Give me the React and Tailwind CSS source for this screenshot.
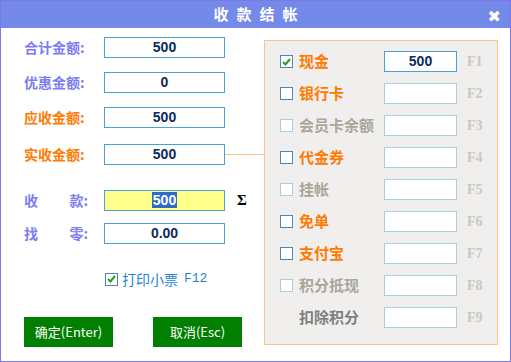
import { useState } from "react";

const cjk = "font-['SimSun','Noto_Sans_CJK_SC',sans-serif]";

const payRows = [
  { label: "现金", key: "F1", checked: true, value: "500", tone: "orange", active: true },
  { label: "银行卡", key: "F2", tone: "orange" },
  { label: "会员卡余额", key: "F3", tone: "gray" },
  { label: "代金券", key: "F4", tone: "orange" },
  { label: "挂帐", key: "F5", tone: "gray" },
  { label: "免单", key: "F6", tone: "orange" },
  { label: "支付宝", key: "F7", tone: "orange" },
  { label: "积分抵现", key: "F8", tone: "gray" },
  { label: "扣除积分", key: "F9", tone: "dark", noBox: true },
];

function Check({ checked, disabled }) {
  return (
    <div
      className={`w-[13px] h-[13px] shrink-0 border bg-white flex items-center justify-center ${
        disabled ? "border-[#a9cde3]" : "border-[#4f86b5]"
      }`}
    >
      {checked && (
        <svg width="9" height="8" viewBox="0 0 9 8">
          <path d="M1 4 L3.5 6.5 L8 1" stroke="#2f9a1e" strokeWidth="2" fill="none" />
        </svg>
      )}
    </div>
  );
}

function Field({ label, value, tone = "blue", mt, yellow, selected, spread, line }) {
  return (
    <div className={`flex items-center ${mt}`}>
      <div
        className={`w-[80px] shrink-0 flex text-[14px] font-bold ${cjk} ${
          tone === "orange" ? "text-[#ff7a00]" : "text-[#7b7ef0]"
        } ${spread ? "justify-between pr-[16px]" : ""}`}
      >
        {spread ? (
          <>
            <span>{label[0]}</span>
            <span>{label[1]}:</span>
          </>
        ) : (
          <span>{label}:</span>
        )}
      </div>
      <div
        className={`w-[121px] h-[21px] shrink-0 border border-[#4a9fd4] flex items-center justify-center text-[14px] font-bold text-[#0b2a5c] font-['Liberation_Sans',sans-serif] ${
          yellow ? "bg-[#ffff8c]" : "bg-white"
        }`}
      >
        {selected ? <span className="bg-[#3169c6] text-white px-[1px] leading-[16px]">{value}</span> : value}
      </div>
      {yellow && <span className="ml-[12px] text-[15px] font-bold text-black font-['Liberation_Serif',serif]">Σ</span>}
      {line && <div className="w-[39px] h-px shrink-0 bg-[#fcc48a]" />}
    </div>
  );
}

export default function App() {
  const [print, setPrint] = useState(true);
  return (
    <div className="w-[511px] h-[362px] bg-white border border-[#7b78e8] flex flex-col overflow-hidden">
      <div className="h-[27px] bg-[#7489e8] flex items-center justify-center relative shrink-0">
        <span className={`text-white text-[15px] font-bold tracking-[8px] pl-[8px] ${cjk}`}>收款结帐</span>
        <span className="absolute right-[9px] top-[4px] text-white text-[16px] font-bold font-['DejaVu_Sans',sans-serif]">✖</span>
      </div>
      <div className="flex pl-[23px]">
        <div className="w-[240px] shrink-0 flex flex-col">
          <Field label="合计金额" value="500" mt="mt-[9px]" />
          <Field label="优惠金额" value="0" mt="mt-[14px]" />
          <Field label="应收金额" value="500" mt="mt-[14px]" tone="orange" />
          <Field label="实收金额" value="500" mt="mt-[16px]" tone="orange" line />
          <Field label="收款" value="500" mt="mt-[24px]" yellow selected spread />
          <Field label="找零" value="0.00" mt="mt-[11px]" spread />
          <label
            className="flex items-center mt-[25px] ml-[81px] cursor-pointer"
            onClick={() => setPrint(!print)}
          >
            <Check checked={print} />
            <span className={`ml-[4px] text-[14px] text-[#1f86d6] ${cjk}`}>打印小票</span>
            <span className="ml-[6px] text-[13px] text-[#1f86d6] font-['Liberation_Mono',monospace]">F12</span>
          </label>
          <div className="flex justify-between mt-[27px] w-[218px]">
            <button className={`w-[89px] h-[30px] bg-[#007f00] text-white text-[13px] ${cjk}`}>确定(Enter)</button>
            <button className={`w-[89px] h-[30px] bg-[#007f00] text-white text-[13px] ${cjk}`}>取消(Esc)</button>
          </div>
        </div>
        <div className="mt-[12px] w-[234px] h-[305px] shrink-0 border border-[#fcc48a] bg-[#f1efed] pt-[10px] pl-[15px] flex flex-col gap-[11px]">
          {payRows.map((r) => (
            <div key={r.key} className="flex items-center h-[21px]">
              <div className="w-[13px]">{!r.noBox && <Check checked={r.checked} disabled={r.tone === "gray"} />}</div>
              <span
                className={`ml-[6px] w-[85px] text-[15px] font-bold whitespace-nowrap ${cjk} ${
                  r.tone === "orange" ? "text-[#ff7a00]" : r.tone === "gray" ? "text-[#aaa69a]" : "text-[#7f7f7f]"
                }`}
              >
                {r.label}
              </span>
              <div
                className={`w-[73px] h-[21px] bg-white border flex items-center justify-center text-[14px] font-bold text-[#0b2a5c] font-['Liberation_Sans',sans-serif] ${
                  r.active ? "border-[#4a9fd4]" : "border-[#a9cde3]"
                }`}
              >
                {r.value}
              </div>
              <span className="ml-[10px] text-[14px] font-bold text-[#c8c8c8] font-['Liberation_Serif',serif]">{r.key}</span>
            </div>
          ))}
        </div>
      </div>
    </div>
  );
}
